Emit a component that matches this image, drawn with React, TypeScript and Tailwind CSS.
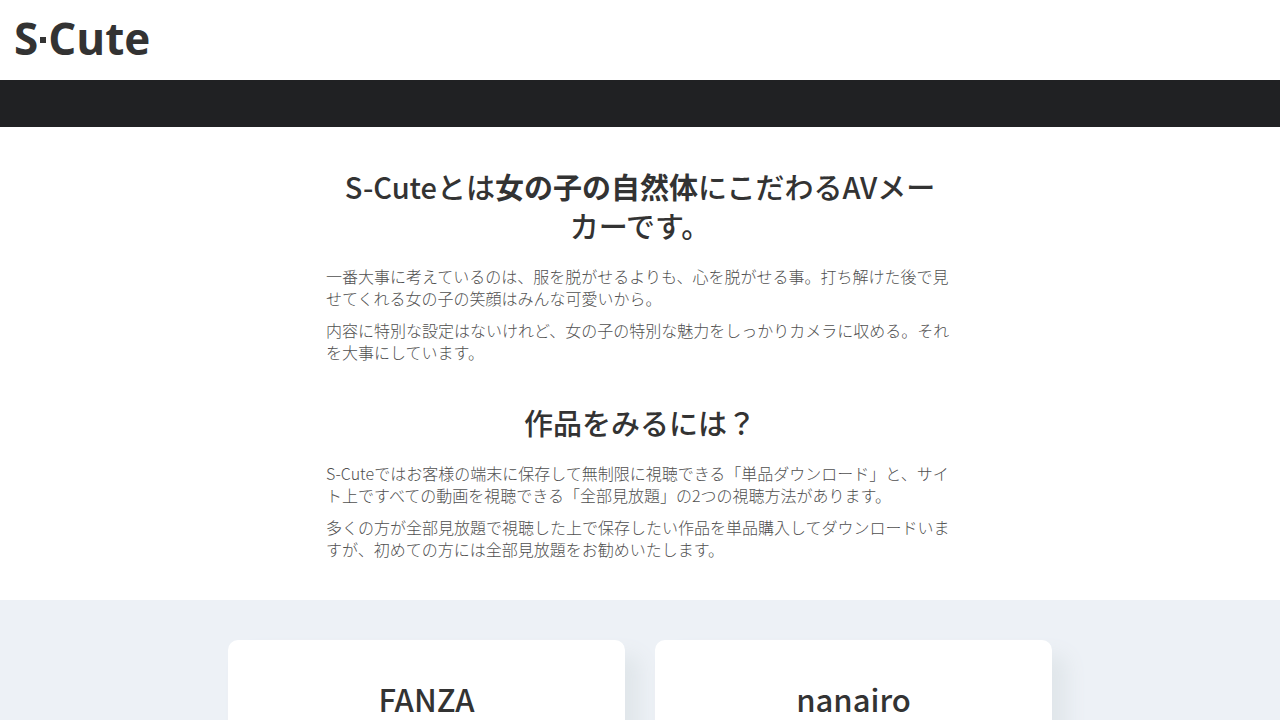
interface Section {
  title: React.ReactNode;
  paragraphs: string[];
}

const sections: Section[] = [
  {
    title: (
      <>
        S-Cuteとは<strong className="font-bold">女の子の自然体</strong>にこだわるAVメーカーです。
      </>
    ),
    paragraphs: [
      "一番大事に考えているのは、服を脱がせるよりも、心を脱がせる事。打ち解けた後で見せてくれる女の子の笑顔はみんな可愛いから。",
      "内容に特別な設定はないけれど、女の子の特別な魅力をしっかりカメラに収める。それを大事にしています。",
    ],
  },
  {
    title: "作品をみるには？",
    paragraphs: [
      "S-Cuteではお客様の端末に保存して無制限に視聴できる「単品ダウンロード」と、サイト上ですべての動画を視聴できる「全部見放題」の2つの視聴方法があります。",
      "多くの方が全部見放題で視聴した上で保存したい作品を単品購入してダウンロードいますが、初めての方には全部見放題をお勧めいたします。",
    ],
  },
];

const shops = ["FANZA", "nanairo"];

function Logo() {
  return (
    <a href="/" aria-label="S-Cute" className="flex items-center font-['Open_Sans',sans-serif] text-[44px] leading-none font-bold text-[#333333]">
      <span>S</span>
      <span className="mx-[2px] mt-1 size-[6px] bg-[#333333]" />
      <span>Cute</span>
    </a>
  );
}

function ShopCard({ name }: { name: string }) {
  return (
    <article className="min-h-60 rounded-[10px] bg-white px-8 pt-10 pb-10 text-center shadow-[15px_15px_20px_#e0e6ea]">
      <h3 className="text-[31px] leading-[38px] font-medium">{name}</h3>
    </article>
  );
}

export default function App() {
  return (
    <div lang="ja" className="min-h-screen bg-white font-['Noto_Sans_CJK_JP',sans-serif] text-[#333333]">
      <header>
        <div className="flex h-20 items-center px-[14px] pb-1">
          <Logo />
        </div>
        <nav className="h-[47px] bg-[#202123]" />
      </header>

      <main>
        <div className="mx-auto flex max-w-[628px] flex-col gap-10 py-10">
          {sections.map((s, i) => (
            <section key={i}>
              <h2 className="px-2 text-center text-[29px] leading-[39px] font-medium">{s.title}</h2>
              <div className="mt-5 flex flex-col gap-[10px] text-[16px] leading-[22px] font-light text-[#505050]">
                {s.paragraphs.map((p) => (
                  <p key={p}>{p}</p>
                ))}
              </div>
            </section>
          ))}
        </div>

        <div className="bg-[#edf1f6] px-8 py-10">
          <div className="mx-auto grid max-w-[824px] grid-cols-2 gap-[30px]">
            {shops.map((name) => (
              <ShopCard key={name} name={name} />
            ))}
          </div>
        </div>
      </main>
    </div>
  );
}
